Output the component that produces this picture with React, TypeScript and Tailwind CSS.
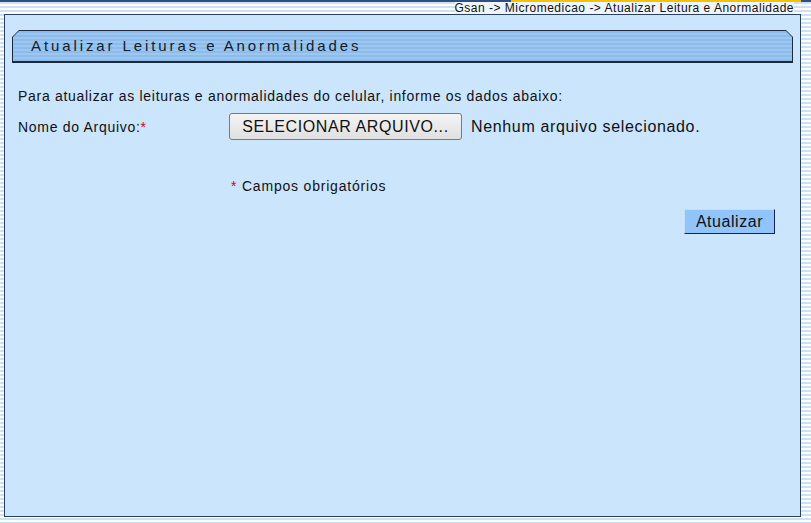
import React from 'react';

export default function App() {
  return (
    <div className="h-[523px] w-full overflow-hidden bg-[repeating-linear-gradient(to_bottom,#ffffff_0px,#ffffff_2px,#cde1f3_2px,#cde1f3_4px)] font-['Liberation_Sans',Arial,sans-serif] text-[#111]">
      {/* top line */}
      <div className="flex h-[2px] justify-end bg-[#2d4f84]">
        <div className="mr-[10px] w-[290px] bg-[#f3c200]" />
      </div>
      {/* breadcrumb */}
      <div className="flex h-[12px] justify-end pr-[17px]">
        <span className="bg-[#eef5fc] text-[12px] leading-[12px] tracking-[0.5px] text-[#111]">
          Gsan -&gt; Micromedicao -&gt; Atualizar Leitura e Anormalidade
        </span>
      </div>

      {/* main panel */}
      <div className="ml-[4px] mr-[10px] h-[503px] border border-[#2b3f5f] bg-[#cbe5fd] px-[7px] pt-[15px]">
        {/* title bar */}
        <div className="bg-[#1c2a3c] pt-[1px] pb-[2px] px-[1px] [clip-path:polygon(7px_0,calc(100%-7px)_0,100%_7px,100%_100%,0_100%,0_7px)]">
          <div className="flex h-[30px] items-center bg-[repeating-linear-gradient(to_bottom,#8dbbea_0px,#8dbbea_2px,#9bc7f2_2px,#9bc7f2_4px)] pl-[18px] [clip-path:polygon(6px_0,calc(100%-6px)_0,100%_6px,100%_100%,0_100%,0_6px)]">
            <span className="text-[15px] tracking-[2.9px] text-[#141c2a]">Atualizar Leituras e Anormalidades</span>
          </div>
        </div>

        {/* content */}
        <div className="px-[6px] pt-[25px] text-[14px] leading-[16px] tracking-[0.7px]">
          <p>Para atualizar as leituras e anormalidades do celular, informe os dados abaixo:</p>

          <div className="mt-[9px] flex items-center">
            <div className="w-[211px] self-start pt-[6px]">
              Nome do Arquivo:<span className="text-[#e00000]">*</span>
            </div>
            <button className="h-[27px] w-[233px] rounded-[3px] border border-[#7a7a7a] bg-[linear-gradient(to_bottom,#f4f4f4,#e0e0e0)] text-[16px] leading-[18px] tracking-[0.6px] text-[#111]">
              SELECIONAR ARQUIVO...
            </button>
            <span className="ml-[9px] text-[16px] leading-[18px] tracking-[0.65px]">Nenhum arquivo selecionado.</span>
          </div>

          <div className="mt-[38px] pl-[213px] tracking-[0.8px]">
            <span className="text-[#e00000]">*</span> Campos obrigatórios
          </div>

          <div className="mt-[15px] flex justify-end pr-[12px]">
            <button className="h-[25px] w-[91px] border border-t-[#c9dcf0] border-l-[#c9dcf0] border-r-[#17245a] border-b-[#17245a] bg-[#90c4fb] text-[16px] leading-[18px] tracking-[0.55px] text-[#111]">
              Atualizar
            </button>
          </div>
        </div>
      </div>
    </div>
  );
}
